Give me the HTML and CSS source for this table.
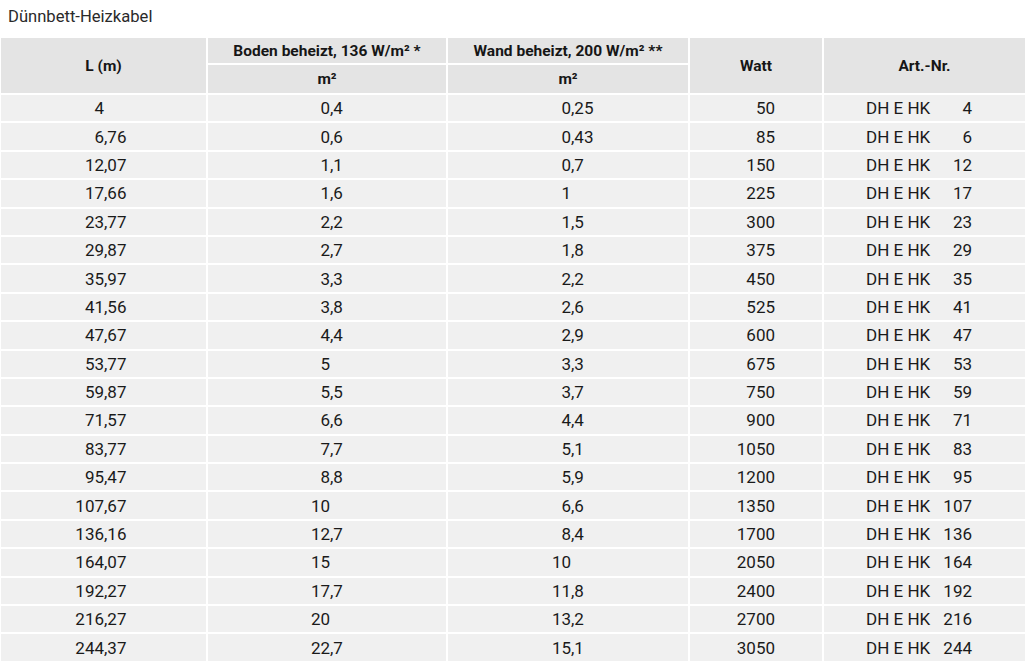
FILE: index.html
```html
<!DOCTYPE html>
<html lang="de">
<head>
<meta charset="utf-8">
<title>Dünnbett-Heizkabel</title>
<link rel="stylesheet" href="styles.css">
</head>
<body>
<h1 class="title">Dünnbett-Heizkabel</h1>
<table class="spec">
  <colgroup>
    <col class="w-l"><col class="w-boden"><col class="w-wand"><col class="w-watt"><col class="w-art">
  </colgroup>
  <thead>
    <tr class="h1">
      <th rowspan="2">L (m)</th>
      <th>Boden beheizt, 136 W/m² *</th>
      <th>Wand beheizt, 200 W/m² **</th>
      <th rowspan="2">Watt</th>
      <th rowspan="2">Art.-Nr.</th>
    </tr>
    <tr class="h2">
      <th>m²</th>
      <th>m²</th>
    </tr>
  </thead>
  <tbody id="rows"></tbody>
</table>
<script src="app.js"></script>
</body>
</html>
```

FILE: app.js
```js
const data = [
  ["4","0,4","0,25","50","4"],
  ["6,76","0,6","0,43","85","6"],
  ["12,07","1,1","0,7","150","12"],
  ["17,66","1,6","1","225","17"],
  ["23,77","2,2","1,5","300","23"],
  ["29,87","2,7","1,8","375","29"],
  ["35,97","3,3","2,2","450","35"],
  ["41,56","3,8","2,6","525","41"],
  ["47,67","4,4","2,9","600","47"],
  ["53,77","5","3,3","675","53"],
  ["59,87","5,5","3,7","750","59"],
  ["71,57","6,6","4,4","900","71"],
  ["83,77","7,7","5,1","1050","83"],
  ["95,47","8,8","5,9","1200","95"],
  ["107,67","10","6,6","1350","107"],
  ["136,16","12,7","8,4","1700","136"],
  ["164,07","15","10","2050","164"],
  ["192,27","17,7","11,8","2400","192"],
  ["216,27","20","13,2","2700","216"],
  ["244,37","22,7","15,1","3050","244"]
];
function dec(v, cls) {
  const i = v.indexOf(",");
  const a = i < 0 ? v : v.slice(0, i);
  const b = i < 0 ? "" : v.slice(i);
  return '<td class="' + cls + '"><span class="int">' + a + '</span><span class="frac">' + b + '</span></td>';
}
const tb = document.getElementById("rows");
tb.innerHTML = data.map(r =>
  "<tr>" +
  dec(r[0], "c-l") +
  dec(r[1], "c-boden") +
  dec(r[2], "c-wand") +
  '<td class="c-watt">' + r[3] + "</td>" +
  '<td class="c-art"><span class="art"><span class="pre">DH E HK</span><span class="num">' + r[4] + "</span></span></td>" +
  "</tr>"
).join("");
```

FILE: styles.css
```css
html, body {
  margin: 0;
  padding: 0;
  background: #ffffff;
}
body {
  font-family: "Liberation Sans Narrow", "Roboto", "Liberation Sans", sans-serif;
  color: #1a1a1a;
}
.title {
  margin: 0;
  padding: 8px 0 0 8px;
  height: 28px;
  box-sizing: border-box;
  font-size: 16.6px;
  font-weight: normal;
  color: #2a2a2a;
  line-height: 18px;
}
.spec {
  border-collapse: separate;
  border-spacing: 2px;
  width: 1028px;
  margin: 8px 0 0 -1px;
  table-layout: fixed;
  font-size: 17px;
}
.w-l { width: 205px; }
.w-boden { width: 238px; }
.w-wand { width: 240px; }
.w-watt { width: 132px; }
.w-art { width: 201px; }
.spec th {
  background: #e4e4e4;
  font-weight: bold;
  font-size: 15.5px;
  color: #161616;
  text-align: center;
  padding: 0;
}
.h1 th { height: 25px; }
.h2 th { height: 28px; }
.spec td {
  background: #f0f0f0;
  height: 26.4px;
  padding: 0;
  white-space: nowrap;
  line-height: 20px;
}
.int {
  display: inline-block;
  text-align: right;
}
.c-l { padding-left: 60px !important; }
.c-l .int { width: 43px; }
.c-boden { padding-left: 91px !important; }
.c-boden .int { width: 31px; }
.c-wand { padding-left: 92px !important; }
.c-wand .int { width: 31px; }
.c-watt {
  text-align: right;
  padding-right: 47px !important;
}
.c-art { padding-left: 42px !important; }
.art {
  display: inline-flex;
  justify-content: space-between;
  width: 106px;
}
```
